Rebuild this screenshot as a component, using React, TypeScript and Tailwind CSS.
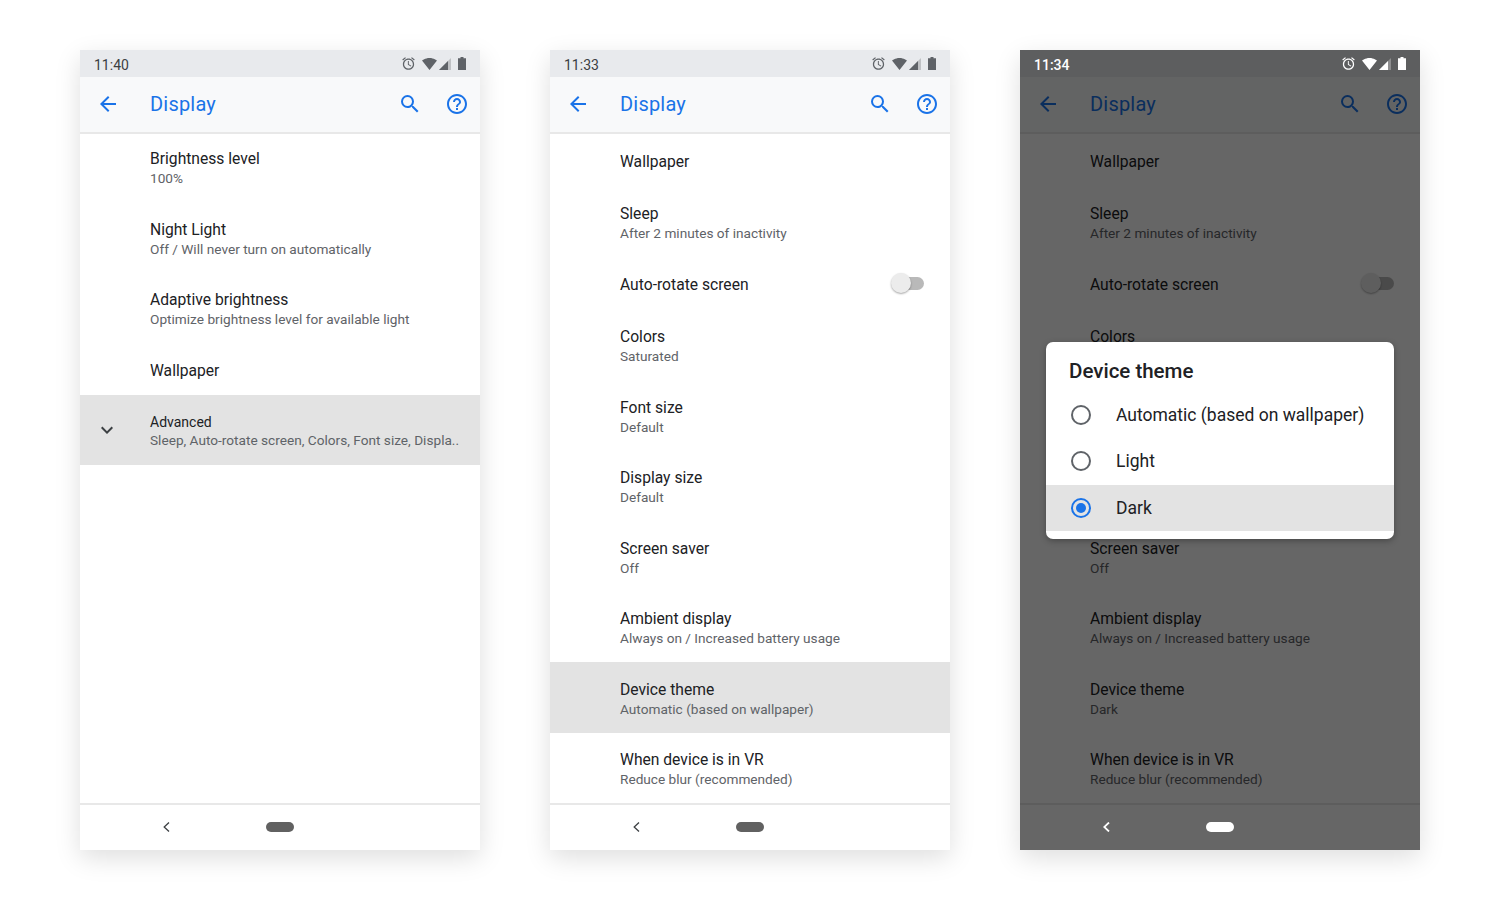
const ICONS = {
  back: "M20 11H7.83l5.59-5.59L12 4l-8 8 8 8 1.41-1.41L7.83 13H20v-2z",
  search:
    "M15.5 14h-.79l-.28-.27A6.471 6.471 0 0 0 16 9.5 6.5 6.5 0 1 0 9.5 16c1.61 0 3.09-.59 4.23-1.57l.27.28v.79l5 4.99L20.49 19l-4.99-5zm-6 0C7.01 14 5 11.99 5 9.5S7.01 5 9.5 5 14 7.01 14 9.5 11.99 14 9.5 14z",
  help: "M11 18h2v-2h-2v2zm1-16C6.48 2 2 6.48 2 12s4.48 10 10 10 10-4.48 10-10S17.52 2 12 2zm0 18c-4.41 0-8-3.59-8-8s3.59-8 8-8 8 3.59 8 8-3.59 8-8 8zm0-14c-2.21 0-4 1.79-4 4h2c0-1.1.9-2 2-2s2 .9 2 2c0 2-3 1.75-3 5h2c0-2.25 3-2.5 3-5 0-2.21-1.79-4-4-4z",
  alarm:
    "M22 5.72l-4.6-3.86-1.29 1.53 4.6 3.86L22 5.72zM7.88 3.39L6.6 1.86 2 5.71l1.29 1.53 4.59-3.85zM12.5 8H11v6l4.75 2.85.75-1.23-4-2.37V8zM12 4c-4.97 0-9 4.03-9 9s4.03 9 9 9 9-4.03 9-9-4.03-9-9-9zm0 16c-3.87 0-7-3.13-7-7s3.13-7 7-7 7 3.13 7 7-3.13 7-7 7z",
  expand: "M16.59 8.59L12 13.17 7.41 8.59 6 10l6 6 6-6z",
};

interface Row {
  title: string;
  sub?: string;
  box: string;
  active?: boolean;
  chevron?: boolean;
  toggle?: boolean;
  smallTitle?: boolean;
}

function Icon({ d, className }: { d: string; className: string }) {
  return (
    <svg viewBox="0 0 24 24" fill="currentColor" className={className}>
      <path d={d} />
    </svg>
  );
}

function StatusBar({ time, dark }: { time: string; dark?: boolean }) {
  const color = dark ? "text-white" : "text-[#5f6368]";
  return (
    <div className="flex h-[27px] items-center justify-between bg-[#e8eaed] pl-[14px] pr-[14px]">
      <span
        className={`relative z-20 mt-[3px] text-[14px] ${dark ? "font-medium text-white" : "text-[#3c4043]"}`}
      >
        {time}
      </span>
      <div className={`relative z-20 flex items-center ${color}`}>
        <Icon d={ICONS.alarm} className="h-[15px] w-[15px]" />
        <svg viewBox="0 0 15 12" fill="currentColor" className="ml-[6px] h-[12px] w-[15px]">
          <path d="M7.5 12L15 2.6C14.7 2.4 11.9 0 7.5 0S.3 2.4 0 2.6L7.5 12z" />
        </svg>
        <svg viewBox="0 0 12 12" className="ml-[2px] h-[12px] w-[12px]">
          <path d="M0 12h12V0z" fill="currentColor" opacity="0.3" />
          <path d="M9 3L0 12h9z" fill="currentColor" />
        </svg>
        <svg viewBox="0 0 8 13" fill="currentColor" className="ml-[7px] h-[13px] w-[8px]">
          <path d="M2.5 0h3v1.2H8V13H0V1.2h2.5z" />
        </svg>
      </div>
    </div>
  );
}

function AppBar() {
  return (
    <div className="box-content flex h-[53px] items-center border-b-2 border-[#e8e8e8] bg-[#f8f9fa] pb-[2px] pl-4 pr-[11px] text-[#1a73e8]">
      <Icon d={ICONS.back} className="h-6 w-6" />
      <span className="ml-[30px] flex-1 text-[20px] leading-none tracking-[0.01em]">
        Display
      </span>
      <Icon d={ICONS.search} className="h-6 w-6" />
      <Icon d={ICONS.help} className="ml-[23px] h-6 w-6" />
    </div>
  );
}

function SettingRow({ row }: { row: Row }) {
  return (
    <div
      className={`relative pl-[70px] ${row.box} ${row.active ? "bg-[#e3e3e3]" : ""}`}
    >
      {row.chevron && (
        <Icon
          d={ICONS.expand}
          className="absolute left-[15px] top-[23px] h-6 w-6 text-[#3c4043]"
        />
      )}
      <div
        className={`${row.smallTitle ? "text-[14px] leading-[18px]" : "text-[15.65px] leading-[20px]"} text-[#202124]`}
      >
        {row.title}
      </div>
      {row.sub && (
        <div className="whitespace-nowrap text-[13.65px] leading-[19px] text-[#5f6368]">
          {row.sub}
        </div>
      )}
      {row.toggle && (
        <div className="absolute right-[26px] top-[15px] flex h-5 w-[33px] items-center">
          <div className="ml-1 h-[13px] w-[29px] rounded-full bg-[#b9b9b9]" />
          <div className="absolute left-0 top-0 h-5 w-5 rounded-full bg-[#ececec] shadow-[0_1px_2px_rgba(0,0,0,0.35)]" />
        </div>
      )}
    </div>
  );
}

function NavBar({ dark }: { dark?: boolean }) {
  return (
    <div className="flex h-[47px] items-center border-t-2 border-[#e8e8e8] pb-[2px] pl-[83px]">
      <svg
        viewBox="0 0 7 10"
        fill="none"
        stroke="currentColor"
        strokeWidth={dark ? 1.8 : 1.3}
        className={`relative z-20 h-[10px] w-[7px] ${dark ? "text-white" : "text-[#3c4043]"}`}
      >
        <path d="M6 .5L1.2 5 6 9.5" />
      </svg>
      <div
        className={`relative z-20 ml-[96px] h-[10px] w-[28px] rounded-full ${dark ? "bg-white" : "bg-[#616161]"}`}
      />
    </div>
  );
}

function Radio({ checked }: { checked?: boolean }) {
  return (
    <div
      className={`flex h-5 w-5 items-center justify-center rounded-full border-2 ${checked ? "border-[#1a73e8]" : "border-[#5f6368]"}`}
    >
      {checked && <div className="h-[10px] w-[10px] rounded-full bg-[#1a73e8]" />}
    </div>
  );
}

function ThemeDialog() {
  const options = [
    { label: "Automatic (based on wallpaper)", height: "h-[46px] pb-px", text: "mt-[2px]" },
    { label: "Light", height: "h-[47px] pb-[2px]", text: "mt-[2px]" },
    { label: "Dark", height: "h-[46px]", text: "", checked: true },
  ];
  return (
    <div className="absolute left-[26px] top-[292px] z-30 h-[197px] w-[348px] rounded-[7px] bg-white pt-[15px] shadow-[0_2px_6px_rgba(0,0,0,0.3)]">
      <div className="pl-[23px] text-[20.5px] font-medium leading-[28px] text-[#202124]">
        Device theme
      </div>
      <div className="mt-[7px]">
        {options.map((o) => (
          <div
            key={o.label}
            className={`flex items-center pl-[25px] ${o.height} ${o.checked ? "bg-[#e3e3e3]" : ""}`}
          >
            <Radio checked={o.checked} />
            <span className={`ml-[25px] text-[17.5px] text-[#202124] ${o.text}`}>{o.label}</span>
          </div>
        ))}
      </div>
    </div>
  );
}

function Phone({
  time,
  rows,
  dark,
}: {
  time: string;
  rows: Row[];
  dark?: boolean;
}) {
  return (
    <div className="relative flex h-[800px] w-[400px] flex-col overflow-hidden bg-white shadow-[0_8px_24px_rgba(0,0,0,0.13)]">
      <StatusBar time={time} dark={dark} />
      <AppBar />
      <div className="flex-1">
        {rows.map((r) => (
          <SettingRow key={r.title} row={r} />
        ))}
      </div>
      <NavBar dark={dark} />
      {dark && (
        <>
          <div className="absolute inset-0 z-10 bg-black/60" />
          <ThemeDialog />
        </>
      )}
    </div>
  );
}

const basicRows: Row[] = [
  { title: "Brightness level", sub: "100%", box: "h-[70px] pt-[15px]" },
  { title: "Night Light", sub: "Off / Will never turn on automatically", box: "h-[71px] pt-[16px]" },
  { title: "Adaptive brightness", sub: "Optimize brightness level for available light", box: "h-[70px] pt-[15px]" },
  { title: "Wallpaper", box: "h-[50px] pt-[16px]" },
  {
    title: "Advanced",
    sub: "Sleep, Auto-rotate screen, Colors, Font size, Displa..",
    box: "h-[70px] pt-[18px]",
    active: true,
    chevron: true,
    smallTitle: true,
  },
];

function advancedRows(theme: string, active: boolean): Row[] {
  return [
    { title: "Wallpaper", box: "h-[54px] pt-[18px]" },
    { title: "Sleep", sub: "After 2 minutes of inactivity", box: "h-[70px] pt-[16px]" },
    { title: "Auto-rotate screen", box: "h-[52px] pt-[17px]", toggle: true },
    { title: "Colors", sub: "Saturated", box: "h-[71px] pt-[17px]" },
    { title: "Font size", sub: "Default", box: "h-[71px] pt-[17px]" },
    { title: "Display size", sub: "Default", box: "h-[70px] pt-[16px]" },
    { title: "Screen saver", sub: "Off", box: "h-[71px] pt-[17px]" },
    { title: "Ambient display", sub: "Always on / Increased battery usage", box: "h-[69px] pt-[16px]" },
    { title: "Device theme", sub: theme, box: "h-[71px] pt-[18px]", active },
    { title: "When device is in VR", sub: "Reduce blur (recommended)", box: "h-[70px] pt-[17px]" },
  ];
}

export default function App() {
  return (
    <div className="flex h-[900px] w-[1500px] gap-[70px] overflow-hidden bg-white pl-[80px] pt-[50px] font-['Roboto',sans-serif]">
      <Phone time="11:40" rows={basicRows} />
      <Phone time="11:33" rows={advancedRows("Automatic (based on wallpaper)", true)} />
      <Phone time="11:34" rows={advancedRows("Dark", false)} dark />
    </div>
  );
}
